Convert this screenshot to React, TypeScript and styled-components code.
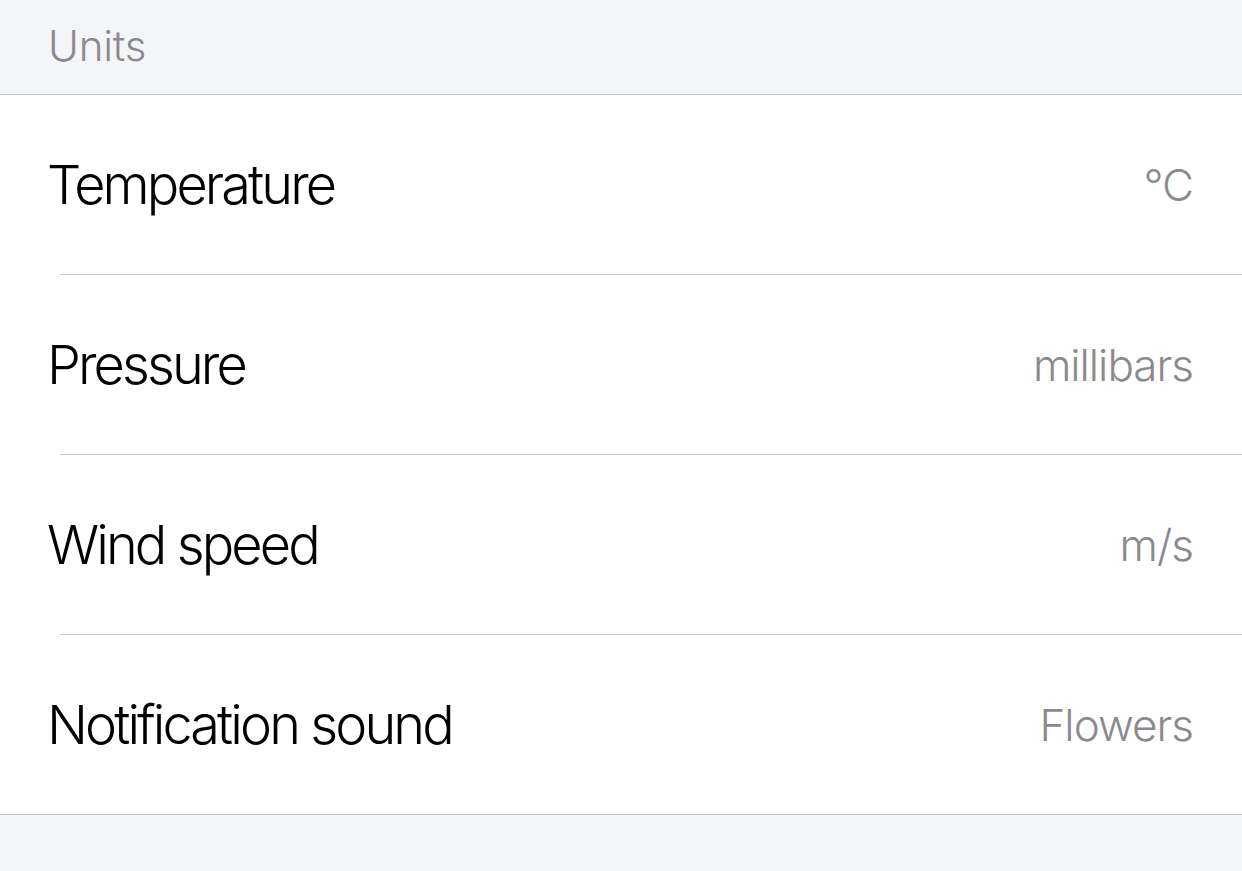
import React from 'react';
import styled, {createGlobalStyle} from 'styled-components';

const GlobalStyle = createGlobalStyle`
  html, body {
    margin: 0;
    padding: 0;
    background: #f4f5f7;
  }
  body {
    font-family: Inter, "Noto Sans", "Liberation Sans", sans-serif;
    -webkit-font-smoothing: antialiased;
  }
`

type Setting = {
    label: string
    value: string
}

const settings: Setting[] = [
    {label: 'Temperature', value: '°C'},
    {label: 'Pressure', value: 'millibars'},
    {label: 'Wind speed', value: 'm/s'},
    {label: 'Notification sound', value: 'Flowers'},
]

const Page = styled.div`
  width: 100%;
  min-height: 871px;
  background: #f4f5f7;
`

const SectionHeader = styled.header`
  height: 95px;
  display: flex;
  align-items: center;
  padding: 0 48px 3px;
  box-sizing: border-box;
  font-size: 42px;
  font-weight: 300;
  letter-spacing: -0.2px;
  color: #8a8a8e;
  border-bottom: 1px solid #c8c8cc;
`

const List = styled.ul`
  margin: 0;
  padding: 0 0 0 60px;
  list-style: none;
  background: #fff;
  border-bottom: 1px solid #c8c8cc;
`

const Row = styled.li<{$last?: boolean}>`
  height: 179px;
  display: flex;
  align-items: center;
  justify-content: space-between;
  padding-right: 49px;
  border-bottom: ${({$last}) => ($last ? 'none' : '1px solid #c8c8cc')};
`

const Label = styled.span`
  margin-left: -13px;
  font-size: 54px;
  font-weight: 300;
  letter-spacing: -2.9px;
  color: #000;
`

const Value = styled.span`
  font-size: 44px;
  font-weight: 300;
  letter-spacing: -1px;
  color: #8a8a8e;
`

const App: React.FC = () => {
    return (
        <Page>
            <GlobalStyle/>
            <SectionHeader>Units</SectionHeader>
            <List>
                {settings.map((s, i) => (
                    <Row key={s.label} $last={i === settings.length - 1}>
                        <Label>{s.label}</Label>
                        <Value>{s.value}</Value>
                    </Row>
                ))}
            </List>
        </Page>
    );
};

export default App;
